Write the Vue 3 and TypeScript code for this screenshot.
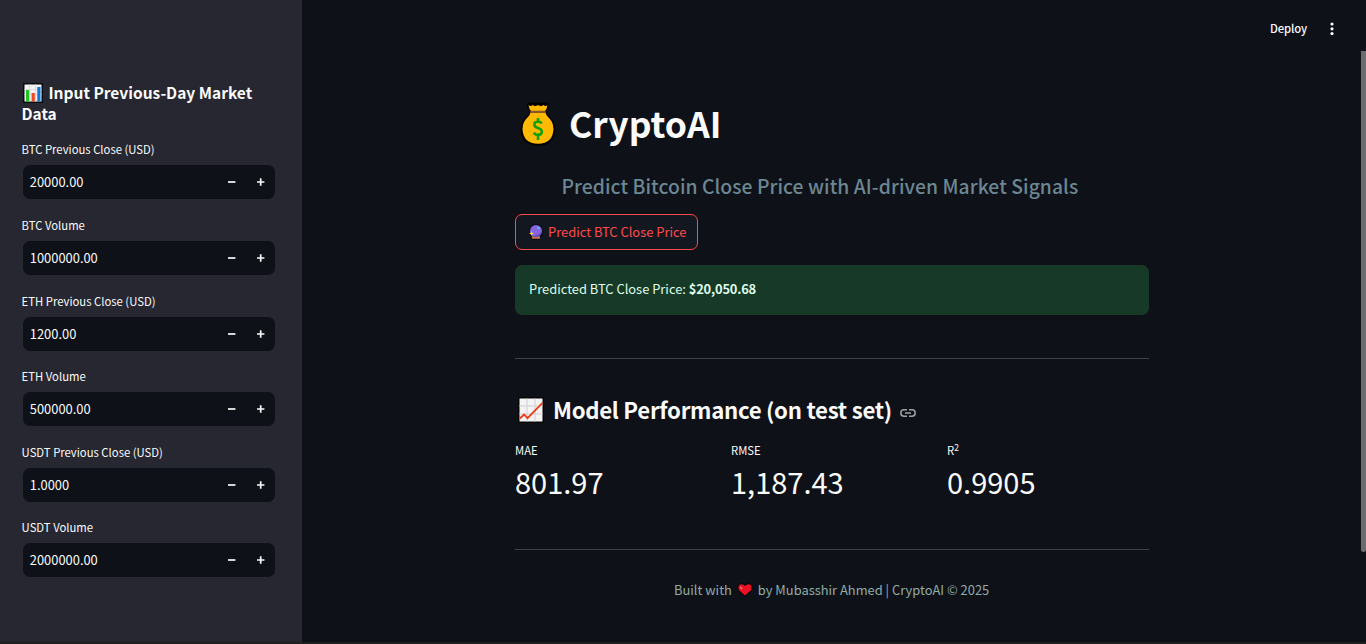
<script setup lang="ts">
interface Field { label: string; value: string }
interface Metric { label: string; value: string; sup?: string }

const fields: Field[] = [
  { label: 'BTC Previous Close (USD)', value: '20000.00' },
  { label: 'BTC Volume', value: '1000000.00' },
  { label: 'ETH Previous Close (USD)', value: '1200.00' },
  { label: 'ETH Volume', value: '500000.00' },
  { label: 'USDT Previous Close (USD)', value: '1.0000' },
  { label: 'USDT Volume', value: '2000000.00' },
]

const metrics: Metric[] = [
  { label: 'MAE', value: '801.97' },
  { label: 'RMSE', value: '1,187.43' },
  { label: 'R', sup: '2', value: '0.9905' },
]
</script>

<template>
  <div class="app">
    <aside class="sidebar">
      <h2 class="side-title">
        <svg class="bars" viewBox="0 0 20 20">
          <rect width="20" height="20" fill="#090a0c" />
          <rect x="1.5" y="1.5" width="17" height="17" fill="#f3f3f5" />
          <path d="M1.5 6.5h17M1.5 11.5h17M6.8 1.5v17M12.5 1.5v17" stroke="#dcdce0" />
          <rect x="3" y="7" width="3.2" height="11.5" fill="#22c322" />
          <rect x="8.6" y="10" width="3.2" height="8.5" fill="#f04b24" />
          <rect x="14.3" y="4" width="3.2" height="14.5" fill="#0f78d4" />
        </svg>
        <span>Input Previous-Day Market</span><br /><span>Data</span>
      </h2>
      <div v-for="f in fields" :key="f.label" class="field">
        <label class="field-label">{{ f.label }}</label>
        <div class="field-box">
          <span class="field-value">{{ f.value }}</span>
          <svg class="step" viewBox="0 0 8 8"><path d="M0 4h7.4" /></svg>
          <svg class="step" viewBox="0 0 8 8"><path d="M0 4h7.4M3.7 .3v7.4" /></svg>
        </div>
      </div>
    </aside>

    <main class="main">
      <header class="toolbar">
        <span class="deploy">Deploy</span>
        <svg class="dots" viewBox="0 0 4 14">
          <circle cx="2" cy="2" r="1.6" /><circle cx="2" cy="6.8" r="1.6" /><circle cx="2" cy="11.6" r="1.6" />
        </svg>
      </header>

      <div class="content">
        <h1 class="title">
          <svg class="bag" viewBox="0 0 36 44">
            <path d="M7 3.5Q7 .5 10 .8Q12 0 14 .8Q16 0 18 .8Q20 0 22 .8Q24 0 26 .8Q29 .5 29 3.5Q28.5 7 26.5 9.5Q26.5 11.5 28 13Q35.5 19 35.5 27.5Q35 43.5 18 43.7Q1 43.5 .5 27.5Q.5 19 8 13Q9.5 11.5 9.5 9.5Q7.500 7 7 3.500Z" fill="#000" />
            <path d="M8.500 3q2 2 4 0q2.500 2 5.500 0q3 2 5.500 0q2 2 4 0q-.5 4-2.500 6h-14q-2-2-2.500-6Z" fill="#ffb900" />
            <path d="M10.500 10.500h15q.5 2.500 2.500 4.500q5.500 4.500 5.500 12q-.5 14.500-15.500 14.700q-15-.2-15.500-14.700q0-7.500 5.500-12q2-2 2.500-4.500Z" fill="#ffb900" />
            <path d="M10.300 8.700h15.400v2.100h-15.400Z" fill="#8e562e" />
            <path d="M21.800 21.500q-1.200-2-3.800-2q-3.800.2-3.700 3.100q.1 2.400 3.700 3.400q3.900 1.200 3.900 3.900q-.2 3-3.900 3q-2.900 0-4.100-2.300M18 16v3.500M18 33v5" fill="none" stroke="#13a10e" stroke-width="2.600" />
          </svg>
          <span>CryptoAI</span>
        </h1>
        <h3 class="subtitle"><span>Predict Bitcoin Close Price with AI-driven Market Signals</span></h3>
        <button class="predict" type="button">
          <svg class="ball" viewBox="0 0 14 16">
            <path d="M3.500 15.700q-1.500-.2-1.100-2.700q-2.100-2-2.100-5.500q.2-7.200 6.700-7.300q6.500.1 6.700 7.300q0 3.500-2.100 5.500q.4 2.500-1.100 2.700Z" fill="#08080a" />
            <path d="M3.300 12h7.400l.5 2.800h-8.400Z" fill="#c27a50" />
            <circle cx="7" cy="7" r="6" fill="#8566e0" />
            <path d="M7 13q5.500-.5 6-6q-3 4.500-9 5.200q1.500 1 3 .8Z" fill="#6544b8" />
            <ellipse cx="9.500" cy="4" rx="1.500" ry="1" fill="#55c7f5" />
            <path d="M2.500 7l.7 1.800 1.800.7-1.800.7-.7 1.800-.7-1.800-1.800-.7 1.800-.7Z" fill="#ffd42a" />
          </svg>
          <span>Predict BTC Close Price</span>
        </button>
        <div class="alert"><span>Predicted BTC Close Price: </span><strong>$20,050.68</strong></div>
        <hr class="rule" />
        <h2 class="section">
          <svg class="chart" viewBox="0 0 26 26">
            <rect width="26" height="26" fill="#050506" />
            <rect x="1.500" y="1.500" width="23" height="23" fill="#f3f3f4" />
            <path d="M9 1.500v23M17 1.500v23M1.500 9h23M1.500 17h23" stroke="#cfcfd2" />
            <path d="M1.800 21.500l4.300-4 3.400 3.700L24.500 5.800" fill="none" stroke="#f03a17" stroke-width="1.800" />
          </svg>
          <span>Model Performance (on test set)</span>
          <svg class="link" viewBox="0 0 16 8">
            <path d="M7 .8H4a3.200 3.200 0 0 0 0 6.400h3M9 .8h3a3.200 3.200 0 0 1 0 6.400H9M5 4h6" />
          </svg>
        </h2>
        <div class="metrics">
          <div v-for="m in metrics" :key="m.label" class="metric">
            <div class="metric-label">{{ m.label }}<sup v-if="m.sup">{{ m.sup }}</sup></div>
            <div class="metric-value">{{ m.value }}</div>
          </div>
        </div>
        <hr class="rule second" />
        <footer class="footer">
          <span>Built with</span>
          <svg class="heart" viewBox="0 0 16 14">
            <path d="M8 13.700L1 7.500Q-.5 4.500 1.500 1.500Q4.500-1 8 1.500Q11.500-1 14.500 1.500Q16.500 4.500 15 7.500Z" fill="#08080a" />
            <path d="M8 12.600L1.800 6.900Q.5 4.300 2.200 2.100Q5 0 8 2.900Q11 0 13.800 2.100Q15.500 4.300 14.200 6.900Z" fill="#e81224" />
            <path d="M3.200 4l2 2" stroke="#f87c83" stroke-width="1.300" />
          </svg>
          <span>by Mubasshir Ahmed | CryptoAI © 2025</span>
        </footer>
      </div>
      <div class="scroll"></div>
    </main>
    <div class="edge"></div>
  </div>
</template>

<style>
html, body { margin: 0; background: #0e1117; overflow: hidden; }
</style>

<style scoped>
* { box-sizing: border-box; }
.app {
  position: relative;
  display: flex;
  width: 1366px;
  height: 644px;
  overflow: hidden;
  background: #0e1117;
  color: #fafafa;
  font-family: "Noto Sans CJK SC", "Noto Sans", sans-serif;
}
h1, h2, h3 { margin: 0; }
svg { display: block; flex: none; }
span, .field-label { white-space: pre; }
.sidebar { width: 302px; padding: 82px 27px 0 22px; background: #262730; }
.side-title {
  height: 56.4px;
  margin-left: -.5px;
  font-size: 15.500px;
  font-weight: 600;
  line-height: 21px;
}
.bars { display: inline-block; width: 20px; height: 20px; margin: 0 5.500px 0 1.500px; vertical-align: -4px; }
.field { height: 75.6px; }
.field-label { display: block; height: 27px; margin-left: -.4px; font-size: 11.300px; font-weight: 400; line-height: 22px; }
.field-box {
  display: flex;
  align-items: center;
  height: 34px;
  margin-left: 1px;
  padding: 0 10px 0 6.800px;
  border-radius: 7px;
  background: #0e1117;
}
.field-value { flex: 1; font-size: 12.900px; line-height: 34px; }
.step { width: 8px; height: 8px; margin-left: 21px; fill: none; stroke: #fafafa; stroke-width: 1.700; }
.main { position: relative; flex: 1; }
.toolbar { display: flex; align-items: center; height: 58px; padding: 0 32px 0 968px; }
.deploy { width: 60px; font-size: 11.300px; font-weight: 500; line-height: 20px; letter-spacing: -.15px; margin-top: -2px; }
.dots { width: 4px; height: 14px; fill: #fafafa; }
.content { width: 634px; margin-left: 213px; padding-top: 38px; }
.title { display: flex; align-items: center; height: 58px; padding-left: 5px; font-size: 35.500px; font-weight: 700; line-height: 58px; }
.bag { width: 36px; height: 44px; margin: -3px 13px 0 0; }
.title span { position: relative; top: -2px; }
.subtitle { height: 60px; padding: 17px 0 0 46.500px; color: #6c8793; font-size: 19.300px; font-weight: 500; line-height: 30px; letter-spacing: .065px; }
.predict {
  display: flex;
  align-items: center;
  width: 183px;
  height: 36px;
  padding: 0 0 0 13px;
  border: 1px solid #ff4b4b;
  border-radius: 7px;
  background: #131720;
  color: #ff4b4b;
  font: 400 12.900px/34px "Noto Sans CJK SC", sans-serif;
}
.ball { width: 14px; height: 16px; margin-right: 5px; }
.alert { height: 50px; margin-top: 15px; padding-left: 14px; border-radius: 7px; background: #173928; color: #dffde9; font-size: 12.900px; line-height: 48px; }
.alert strong { font-weight: 700; letter-spacing: -.2px; }
.rule { height: 1px; margin: 43px 0 0; border: 0; background: #3d4044; }
.section { display: flex; align-items: center; height: 50px; margin-top: 27px; padding-left: 3px; font-size: 22.200px; font-weight: 600; line-height: 50px; letter-spacing: -.28px; }
.chart { width: 26px; height: 26px; margin: -2px 9px 0 0; }
.section span { position: relative; top: -2px; }
.link { width: 16px; height: 8px; margin: 4px 0 0 8px; fill: none; stroke: #a0a1a5; stroke-width: 1.500; }
.metrics { display: grid; grid-template-columns: repeat(3, 216px); margin-top: 4px; }
.metric { height: 66px; }
.metric-label { height: 20px; font-size: 11.300px; line-height: 20px; }
.metric-label sup { font-size: 8.500px; line-height: 0; vertical-align: 4px; }
.metric-value { height: 46px; font-size: 29px; line-height: 42px; }
.rule.second { margin-top: 43px; }
.footer { display: flex; align-items: center; height: 20px; margin-top: 30px; padding-left: 159px; color: #91aca8; font-size: 12.900px; line-height: 20px; }
.heart { width: 16px; height: 14px; margin: 0 5px; }
.scroll { position: absolute; top: 51px; right: 0; width: 5px; height: 501px; border-radius: 0 0 3px 3px; background: #6b6c70; }
.edge { position: absolute; right: 0; bottom: 0; left: 0; height: 2px; background: #201f20; }
</style>
